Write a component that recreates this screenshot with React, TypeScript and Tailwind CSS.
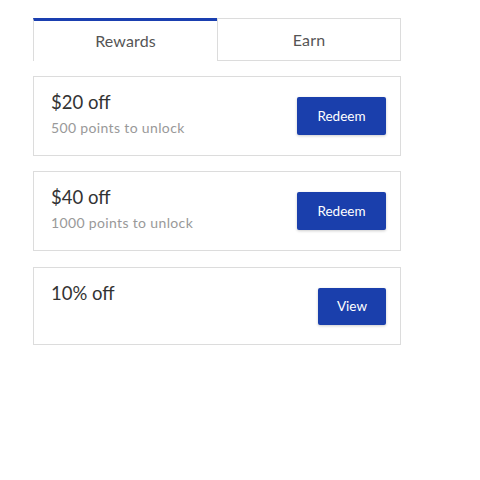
import React, { useState } from "react";

interface Reward {
  title: string;
  subtitle?: string;
  action: string;
}

const rewards: Reward[] = [
  { title: "$20 off", subtitle: "500 points to unlock", action: "Redeem" },
  { title: "$40 off", subtitle: "1000 points to unlock", action: "Redeem" },
  { title: "10% off", action: "View" },
];

function RewardCard({ reward }: { reward: Reward }) {
  const isView = reward.action === "View";
  return (
    <div
      className={
        "flex justify-between items-center border border-[#dcdcdc] bg-white pl-[17px] pr-[14px] " +
        (reward.subtitle ? "h-[80px]" : "h-[78px] mt-[1px]")
      }
    >
      <div className="self-start pt-[12px]">
        <div className="text-[18.5px] leading-[26px] text-[#333]">{reward.title}</div>
        {reward.subtitle && (
          <div className="text-[14px] leading-[20px] text-[#999] tracking-[0.35px] mt-[3px]">
            {reward.subtitle}
          </div>
        )}
      </div>
      <button
        className={
          "bg-[#1a3fac] text-white text-[13.5px] rounded-[2px] shadow-[0_1px_3px_rgba(0,0,0,0.2)] " +
          (isView ? "w-[68px] h-[37px]" : "w-[89px] h-[38px]")
        }
      >
        {reward.action}
      </button>
    </div>
  );
}

export default function App() {
  const [tab, setTab] = useState("rewards");

  return (
    <div className="w-[480px] h-[480px] bg-white pt-[18px] pl-[33px]" style={{ fontFamily: "Lato, 'Noto Sans', sans-serif" }}>
      <div className="w-[368px]">
        {/* tabs */}
        <div className="flex h-[43px]">
          <button
            onClick={() => setTab("rewards")}
            className="w-[184px] border-t-[3px] border-t-[#1a3fb0] border-l border-l-[#dcdcdc] text-[16px] tracking-[0.15px] text-[#555]"
          >
            Rewards
          </button>
          <button
            onClick={() => setTab("earn")}
            className="flex-1 border border-[#dcdcdc] text-[16px] tracking-[0.15px] text-[#555]"
          >
            Earn
          </button>
        </div>

        {/* cards */}
        <div className="flex flex-col gap-[15px] mt-[15px]">
          {tab === "rewards" && rewards.map((r) => <RewardCard key={r.title} reward={r} />)}
        </div>
      </div>
    </div>
  );
}
